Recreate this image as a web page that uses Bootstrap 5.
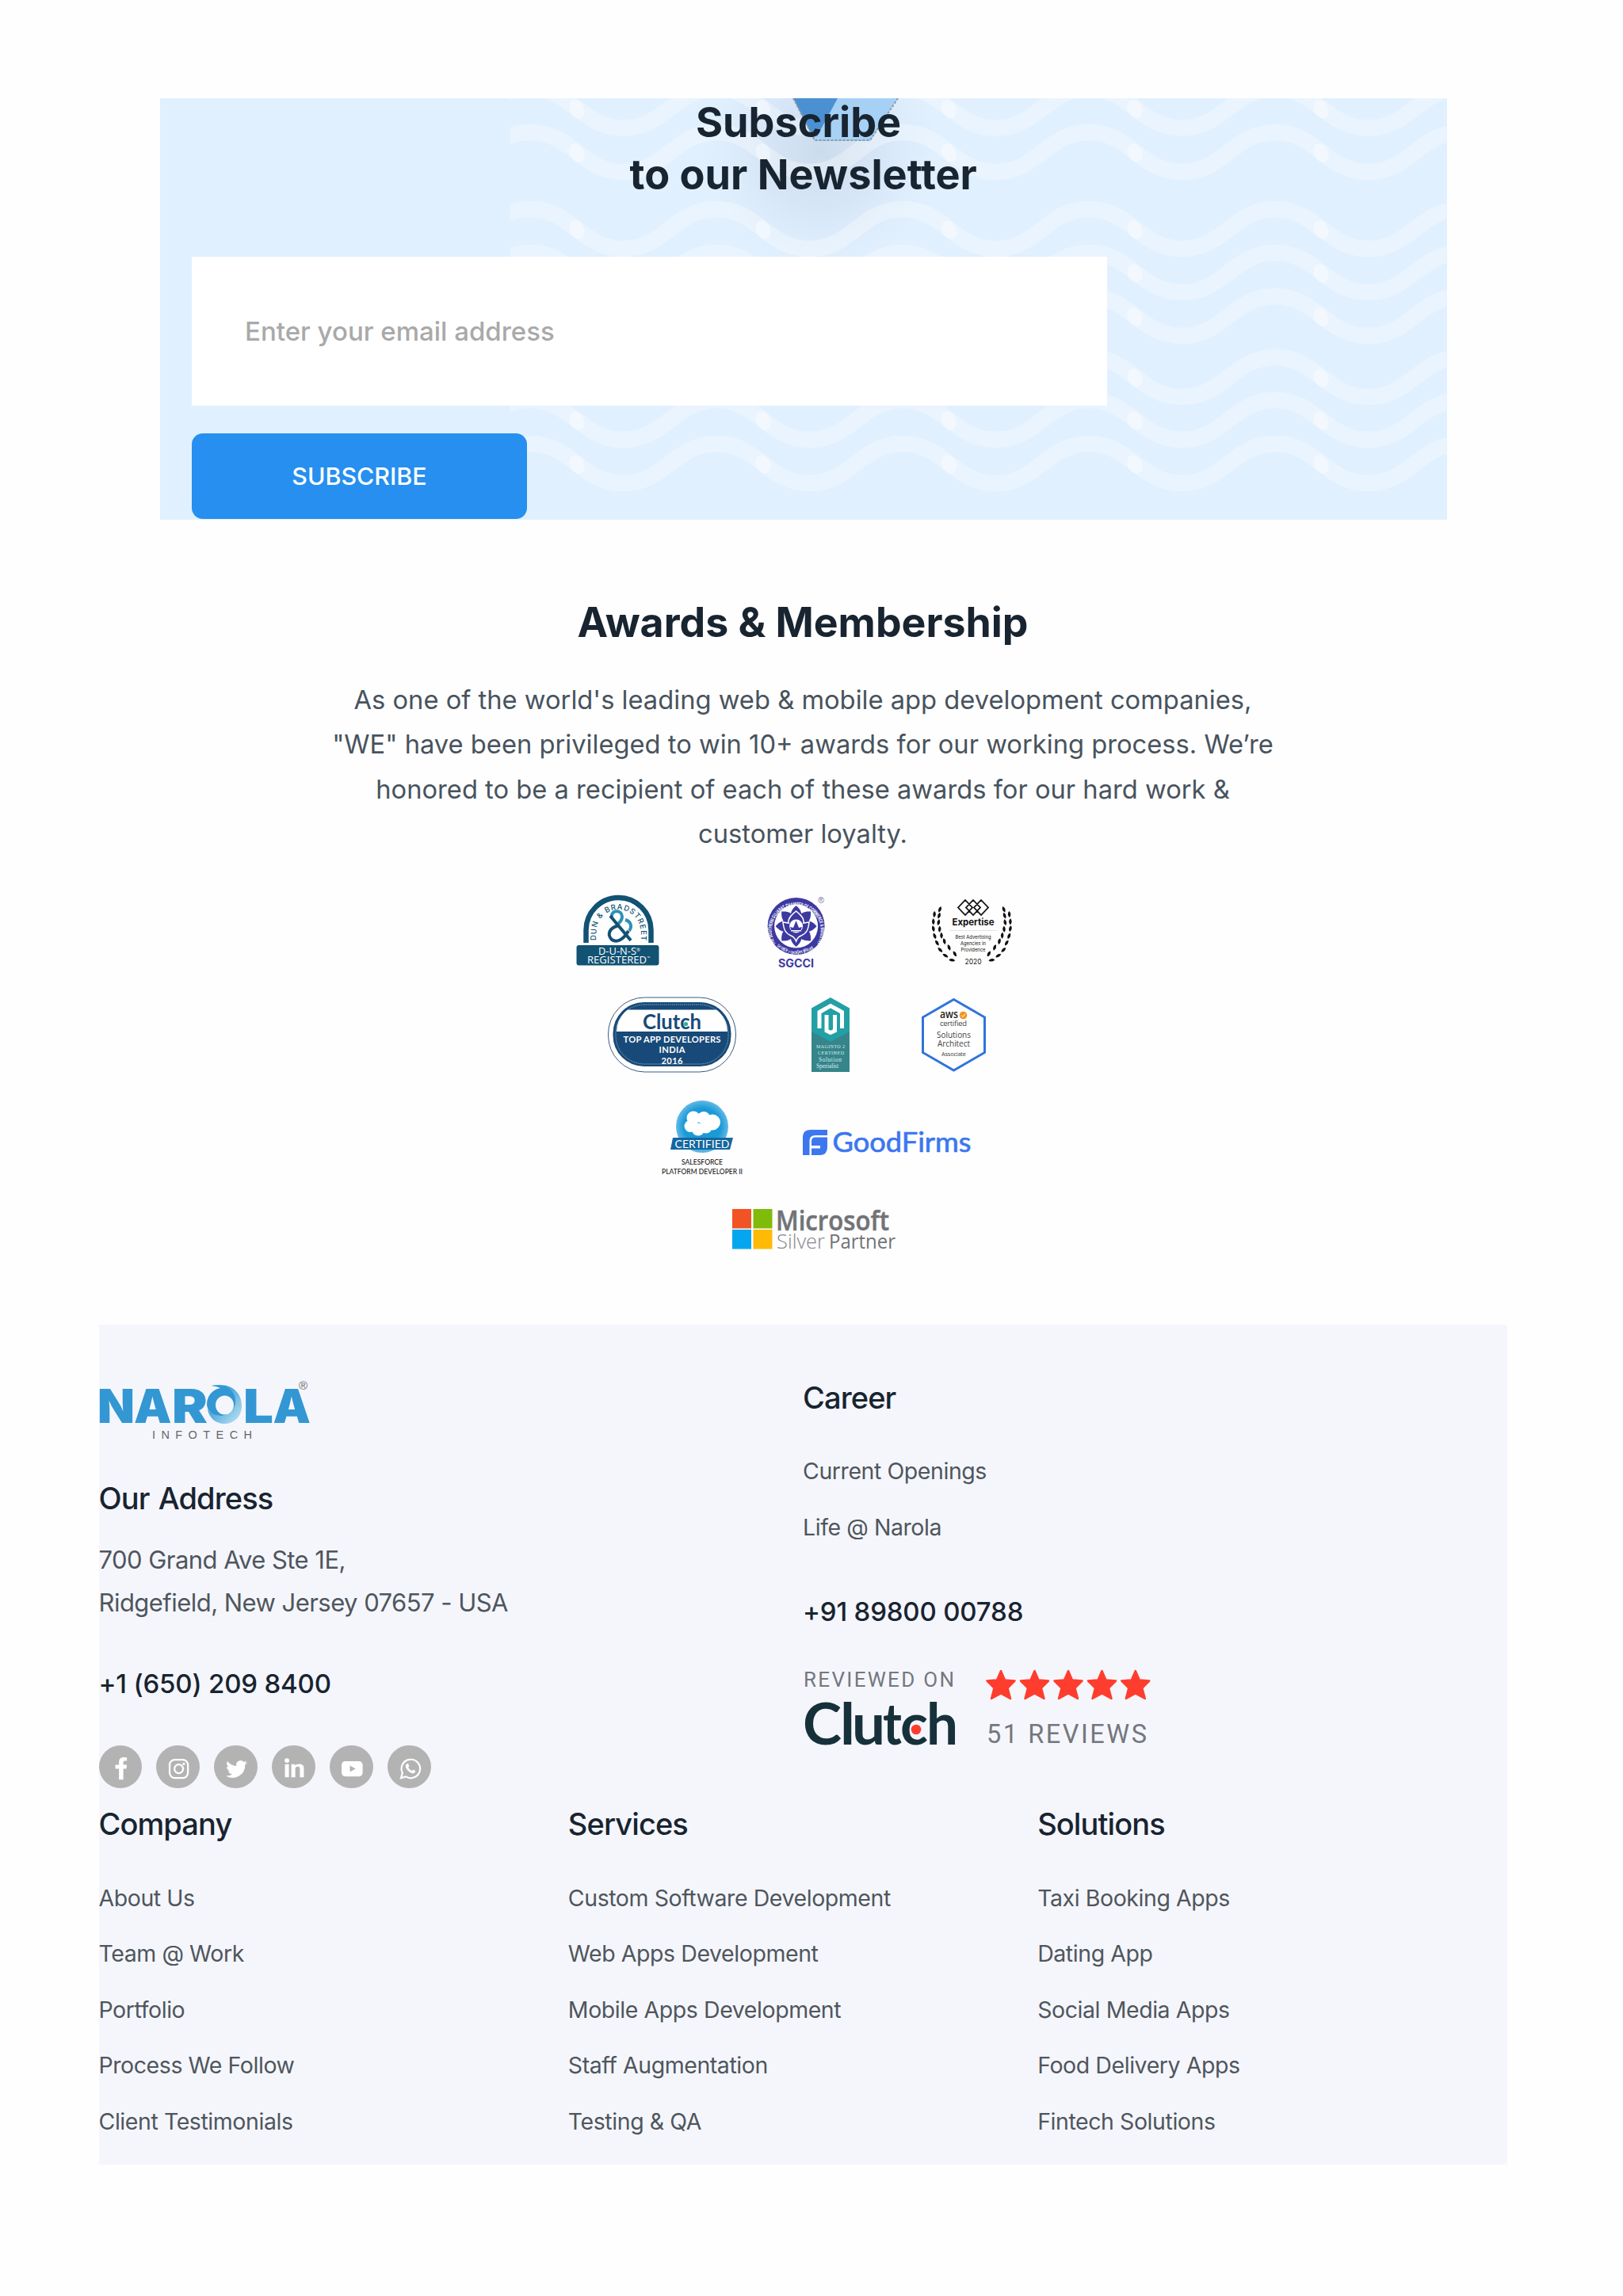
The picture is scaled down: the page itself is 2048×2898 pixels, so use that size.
<!DOCTYPE html>
<html lang="en">
<head>
  <meta charset="UTF-8" />
  <title>Narola Infotech - Newsletter & Awards</title>
  <meta name="viewport" content="width=device-width, initial-scale=1" />
  <link href="https://cdn.jsdelivr.net/npm/bootstrap@5.3.0/dist/css/bootstrap.min.css" rel="stylesheet" />
  <style>
    body {
      background: #fefefe;
      font-family: Inter, "Liberation Sans", sans-serif;
      color: #182430;
    }
    .page {
      width: 1777px;
      margin-left: 124.5px;
      padding-top: 124px;
    }
    svg { display: block; overflow: visible; }

    /* newsletter */
    .newsletter {
      width: 1623.5px;
      height: 531.5px;
      margin-left: 77.5px;
      padding: 0 40px;
      background: #e1f0fe;
    }
    .waves { z-index: 0; }
    .newsletter h2, .newsletter form { z-index: 1; }
    .big-title {
      font-size: 51.8px;
      font-weight: 700;
      line-height: 66px;
      margin: 0;
    }
    .newsletter .big-title { margin: -3px 0 71px; font-size: 52.2px; }
    .email-box {
      width: 1155px;
      height: 188px;
      padding: 0 67px;
      border: 0;
      border-radius: 0;
      background: #fff;
      font-size: 33px;
      font-weight: 500;
    }
    .email-box::placeholder { color: #a9a9a9; }
    .btn-subscribe {
      width: 423px;
      height: 108px;
      margin-top: 35px;
      padding-top: 8px;
      border-radius: 14px;
      background: #268fef;
      color: #fff;
      font-size: 30.4px;
      font-weight: 500;
    }

    /* awards */
    .awards { padding-top: 96.5px; }
    .awards p {
      margin: 36.7px 0 47.3px;
      font-size: 32.7px;
      line-height: 56.5px;
      color: #48535d;
    }
    .award-row-1 { margin-left: 602px; gap: 132px; }
    .award-row-2 { margin: 33px 0 0 641px; gap: 90px; }
    .award-row-3 { margin: 32px 0 0 709px; gap: 72px; }
    .award-row-4 { margin: 38px 0 93px 797px; }

    /* footer */
    .site-footer {
      height: 1060px;
      background: #f5f6fc;
    }
    .site-footer .logo { margin-top: 68px; }
    .foot-title {
      font-size: 38px;
      font-weight: 500;
      line-height: 46px;
      letter-spacing: -.9px;
      word-spacing: 2px;
      margin: 0;
    }
    .logo + .foot-title { margin-top: 50.2px; }
    .address {
      margin: 27.5px 0 55.6px;
      font-size: 31px;
      line-height: 54px;
      letter-spacing: -.54px;
      color: #4f565d;
    }
    .phone {
      font-size: 33px;
      font-weight: 500;
      line-height: 40px;
      letter-spacing: -.18px;
    }
    .social { margin-top: 57.7px; gap: 18.8px; }
    .social a {
      width: 54.2px;
      height: 54.2px;
      background: #b3b3b3;
    }
    .foot-links { margin: 53.6px 0 0; }
    .foot-links li {
      height: 70.5px;
      font-size: 28.5px;
      line-height: 34px;
      letter-spacing: -.43px;
    }
    .foot-links a { color: #4f565d; }
    .career { padding-top: 68.7px; }
    .career .phone { margin-top: 32.4px; }
    .reviews { margin-top: 50px; }
    .foot-menu { margin-top: 22px; }
  </style>
</head>
<body>
<div class="page">

  <section class="newsletter position-relative overflow-hidden">
    <svg class="waves position-absolute top-0 start-0" width="1624" height="532" viewBox="202 124 1624 532">
      <defs>
        <clipPath id="waveClip"><rect x="643.5" y="124" width="1182" height="532" /></clipPath>
        <g id="wave">
          <path d="M434-25C487-25 498 25 551.500 25S616-25 669-25S733 25 786.500 25S851-25 904-25S968 25 1021.500 25S1086-25 1139-25S1203 25 1256.500 25S1321-25 1374-25S1438 25 1491.500 25S1556-25 1609-25S1673 25 1726.500 25S1791-25 1844-25" fill="none" stroke="#fff" stroke-opacity=".31" stroke-width="20.500" />
          <g fill="#fff" fill-opacity=".38">
            <ellipse cx="728" cy="1" rx="9" ry="12" transform="rotate(-25 728 1)" />
            <ellipse cx="963" cy="1" rx="9" ry="12" transform="rotate(-25 963 1)" />
            <ellipse cx="1197.500" cy="1" rx="9" ry="12" transform="rotate(-25 1197.500 1)" />
            <ellipse cx="1432" cy="1" rx="9" ry="12" transform="rotate(-25 1432 1)" />
            <ellipse cx="1667" cy="1" rx="9" ry="12" transform="rotate(-25 1667 1)" />
          </g>
        </g>
        <radialGradient id="shade" cx="1035" cy="190" r="150" gradientUnits="userSpaceOnUse">
          <stop offset="0" stop-color="#b9cbdc" stop-opacity=".55" />
          <stop offset=".5" stop-color="#c4d4ea" stop-opacity=".35" />
          <stop offset="1" stop-color="#d0def2" stop-opacity="0" />
        </radialGradient>
      </defs>
      <rect x="880" y="124" width="310" height="220" fill="url(#shade)" />
      <g clip-path="url(#waveClip)">
        <use href="#wave" y="136.500" />
        <use href="#wave" y="192" />
        <use href="#wave" y="289" />
        <use href="#wave" y="344" />
        <use href="#wave" y="399" />
        <use href="#wave" y="476" />
        <use href="#wave" y="530" />
        <use href="#wave" y="585" />
      </g>
      <!-- tip of the envelope -->
      <path d="M1001 124H1133L1098 178H1028Z" fill="#a6d1f5" />
      <path d="M1001 124H1057L1031 172L1025 172Z" fill="#4a90d3" />
      <path d="M1001 124L1028 177H1098L1133 124" fill="none" stroke="#8f9ba6" stroke-width="2" stroke-dasharray="3 2" />
    </svg>
    <h2 class="big-title text-center position-relative">Subscribe&nbsp;<br />to our Newsletter</h2>
    <form class="position-relative">
      <input type="email" class="form-control email-box shadow-none" placeholder="Enter your email address" />
      <button type="button" class="btn btn-subscribe">SUBSCRIBE</button>
    </form>
  </section>

  <section class="awards">
    <h2 class="big-title text-center">Awards &amp; Membership</h2>
    <p class="text-center">As one of the world's leading web &amp; mobile app development companies,<br />"WE" have been privileged to win 10+ awards for our working process. We’re<br />honored to be a recipient of each of these awards for our hard work &amp;<br />customer loyalty.</p>

    <div class="d-flex award-row-1">
      <!-- D-U-N-S -->
      <svg width="105" height="96" viewBox="726 1128 105 96">
        <defs><path id="dunArc" d="M751.500 1187V1176A28 28 0 0 1 807.500 1176V1190" /></defs>
        <path d="M738.500 1190V1174A41 41 0 0 1 820.500 1174V1190" fill="none" stroke="#125273" stroke-width="6.500" />
        <text font-size="9.500" font-weight="500" fill="#125273"><textPath href="#dunArc" textLength="110">DUN &amp; BRADSTREET</textPath></text>
        <path d="M771 1157C770 1148 784 1148 784 1157C784 1161 782 1163 779 1166M788 1161C795 1163 797 1169 793 1175" fill="none" stroke="#2d92b4" stroke-width="4" />
        <path d="M769 1156L795 1187M780 1168C767 1171 765 1180 771 1186C777 1190 785 1187 792 1175" fill="none" stroke="#125273" stroke-width="4" />
        <rect x="726.500" y="1193" width="104" height="25.500" rx="3" fill="#125273" />
        <g fill="#fff" font-family="Open Sans">
          <text x="754" y="1204.500" font-size="12" textLength="48" lengthAdjust="spacingAndGlyphs">D-U-N-S</text>
          <text x="802" y="1201" font-size="6">®</text>
          <text x="740" y="1216" font-size="12" textLength="75" lengthAdjust="spacingAndGlyphs">REGISTERED</text>
          <text x="815.500" y="1211" font-size="5">™</text>
        </g>
      </svg>
      <!-- SGCCI -->
      <svg width="79" height="96" viewBox="963 1128 79 96">
        <defs>
          <path id="sgTop" d="M978 1191.500A31 31 0 1 1 1029.500 1191.500" />
          <path id="sgLow" d="M979.500 1194.500A34.500 34.500 0 0 0 1028 1194.500" />
          <path id="petal" d="M1003.600 1143C998 1148 996 1152 997 1158H1010.200C1011.200 1152 1009.200 1148 1003.600 1143Z" />
        </defs>
        <circle cx="1003.600" cy="1169" r="36" fill="#3d39a1" />
        <circle cx="1003.600" cy="1169" r="27.500" fill="#fff" />
        <g fill="#3d39a1">
          <use href="#petal" /><use href="#petal" transform="rotate(45 1003.600 1169)" />
          <use href="#petal" transform="rotate(90 1003.600 1169)" /><use href="#petal" transform="rotate(135 1003.600 1169)" />
          <use href="#petal" transform="rotate(180 1003.600 1169)" /><use href="#petal" transform="rotate(225 1003.600 1169)" />
          <use href="#petal" transform="rotate(270 1003.600 1169)" /><use href="#petal" transform="rotate(315 1003.600 1169)" />
        </g>
        <path d="M1003.600 1150C996 1156 993 1160 994 1165L987 1164C988 1173 990 1178 997 1181C1000 1182 1002 1184 1003.600 1188C1005 1184 1007 1182 1010 1181C1017 1178 1019 1173 1020 1164L1013 1165C1014 1160 1011 1156 1003.600 1150Z" fill="#3d39a1" stroke="#fff" stroke-width="1.500" />
        <circle cx="1003.600" cy="1169" r="8.500" fill="#fff" />
        <path d="M996 1170L1000 1171L1003.600 1162L1007 1171L1011 1170L1009.500 1174H997.500Z" fill="#3d39a1" />
        <path d="M997 1175.500H1010" stroke="#9896cf" />
        <text font-size="6.200" font-weight="700" fill="#fff"><textPath href="#sgTop" textLength="133" lengthAdjust="spacingAndGlyphs">THE SOUTHERN GUJARAT CHAMBER OF COMMERCE &amp; INDUSTRY</textPath></text>
        <text font-size="5.500" fill="#fff"><textPath href="#sgLow" textLength="50" lengthAdjust="spacingAndGlyphs">प्रवृत्तिः कार्यसाधिका</textPath></text>
        <text x="1031" y="1140" font-family="Liberation Sans" font-size="11" fill="#77759f">®</text>
        <text x="981" y="1221" font-size="14" font-weight="700" fill="#3d39a1" textLength="45" lengthAdjust="spacingAndGlyphs">SGCCI</text>
      </svg>
      <!-- Expertise -->
      <svg width="108" height="96" viewBox="1172 1128 108 96">
        <defs>
          <path id="leaf" d="M0-12C8-4 6 6-1 12C-8 4-6-5 0-12Z" />
          <g id="laurel">
            <use href="#leaf" transform="translate(655 103)" /><use href="#leaf" transform="translate(651 131) rotate(-5)" />
            <use href="#leaf" transform="translate(651 158) rotate(-15)" /><use href="#leaf" transform="translate(656 186) rotate(-25)" />
            <use href="#leaf" transform="translate(665 212) rotate(-35)" /><use href="#leaf" transform="translate(677 239) rotate(-48)" />
            <use href="#leaf" transform="translate(697 261) rotate(-62)" /><use href="#leaf" transform="translate(722 278) rotate(-85)" />
            <use href="#leaf" transform="translate(676 84) rotate(18)" /><use href="#leaf" transform="translate(673 108) rotate(14)" />
            <use href="#leaf" transform="translate(671 134) rotate(8)" /><use href="#leaf" transform="translate(675 160)" />
            <use href="#leaf" transform="translate(682 184) rotate(-6)" /><use href="#leaf" transform="translate(693 206) rotate(-16)" />
            <use href="#leaf" transform="translate(711 230) rotate(-24)" /><use href="#leaf" transform="translate(733 254) rotate(-32)" />
          </g>
        </defs>
        <g transform="translate(960 1120) scale(.33)" fill="#111">
          <use href="#laurel" />
          <use href="#laurel" transform="translate(1596 0) scale(-1 1)" />
        </g>
        <path d="M1215 1136L1224 1145.500L1215 1155L1206 1145.500ZM1225 1136L1234 1145.500L1225 1155L1216 1145.500ZM1235 1136L1244 1145.500L1235 1155L1226 1145.500Z" fill="none" stroke="#111" stroke-width="1.800" />
        <g fill="#111" text-anchor="middle">
          <text x="1225" y="1167.500" font-size="12" font-weight="700" textLength="53" lengthAdjust="spacingAndGlyphs">Expertise</text>
          <text x="1225" y="1185" font-size="6.500" textLength="45" lengthAdjust="spacingAndGlyphs">Best Advertising</text>
          <text x="1225" y="1193" font-size="6.500" textLength="32" lengthAdjust="spacingAndGlyphs">Agencies in</text>
          <text x="1225" y="1201" font-size="6.500" textLength="31" lengthAdjust="spacingAndGlyphs">Providence</text>
          <text x="1225" y="1217" font-size="9.500" textLength="21" lengthAdjust="spacingAndGlyphs">2020</text>
        </g>
        <path d="M1195 1174.500H1255" stroke="#e3e3e3" />
      </svg>
    </div>

    <div class="d-flex award-row-2">
      <!-- Clutch badge -->
      <svg width="167" height="98" viewBox="765 1257 167 98">
        <defs><clipPath id="pill"><rect x="777" y="1268" width="140" height="75" rx="34" /></clipPath></defs>
        <rect x="766.500" y="1259" width="161" height="94" rx="46" fill="#fff" stroke="#3d5c7c" />
        <rect x="772.500" y="1265" width="149" height="81" rx="39" fill="#174a78" />
        <rect x="776" y="1268" width="142" height="75" rx="36" fill="none" stroke="#a9bfd2" stroke-width=".8" stroke-dasharray="1.500 1" />
        <rect x="776" y="1274.500" width="142" height="27.500" fill="#fff" clip-path="url(#pill)" />
        <text x="810" y="1298.500" font-family="Lato" font-size="27" font-weight="700" fill="#174a78" textLength="74" lengthAdjust="spacingAndGlyphs">Clutch</text>
        <circle cx="864.500" cy="1292.500" r="2.600" fill="#35b08e" />
        <g fill="#fff" font-family="Lato" font-weight="700" font-size="11.200" text-anchor="middle">
          <text x="847" y="1315.500" textLength="123">TOP APP DEVELOPERS</text>
          <text x="847" y="1329" textLength="33">INDIA</text>
          <text x="847" y="1343" textLength="27">2016</text>
        </g>
      </svg>
      <!-- Magento -->
      <svg width="50" height="98" viewBox="1022 1257 50 98">
        <path d="M1023 1272.500L1047 1259L1071 1272.500V1353H1023Z" fill="#22a0a6" />
        <path d="M1023 1302L1047 1315L1071 1302V1353H1023Z" fill="#35858a" />
        <path d="M1033 1298V1277.500L1047 1269.500L1061.500 1277.500V1298M1042 1281V1301L1047 1303.500L1052.500 1301V1281" fill="none" stroke="#fff" stroke-width="5" />
        <g fill="#d8ecec" font-family="Liberation Serif">
          <text x="1029" y="1323" font-size="6" textLength="36">MAGINTO 2</text>
          <text x="1031" y="1331" font-size="6" textLength="33">CERTIHED</text>
          <text x="1032" y="1340" font-size="7.500" textLength="29">Solution</text>
          <text x="1029" y="1347.500" font-size="7.500" textLength="28">Spezialist</text>
        </g>
      </svg>
      <!-- AWS -->
      <svg width="81" height="98" viewBox="1162 1257 81 98">
        <path d="M1202.500 1261.500L1241.500 1284V1328.500L1202.500 1351L1163.500 1328.500V1284Z" fill="#fff" stroke="#2f74dc" stroke-width="3" />
        <text x="1185" y="1285" font-family="Open Sans" font-size="13.500" font-weight="600" fill="#222" textLength="23" lengthAdjust="spacingAndGlyphs">aws</text>
        <circle cx="1214.500" cy="1281.500" r="4.800" fill="#f29325" />
        <path d="M1212 1281.500L1214 1283.500L1217 1279.500" fill="none" stroke="#fff" />
        <g font-family="Open Sans" fill="#444" text-anchor="middle">
          <text x="1202" y="1294.500" font-size="9.500" textLength="34">certified</text>
          <text x="1202.500" y="1309.500" font-size="10" font-weight="500" textLength="43">Solutions</text>
          <text x="1202.500" y="1320.500" font-size="10" font-weight="500" textLength="41">Architect</text>
          <text x="1202.500" y="1332.500" font-size="7.500" textLength="31">Associate</text>
        </g>
      </svg>
    </div>

    <div class="d-flex award-row-3">
      <!-- Salesforce -->
      <svg width="106" height="100" viewBox="833 1387 106 100">
        <defs>
          <radialGradient id="sfGrad"><stop offset=".7" stop-color="#1a9ad6" /><stop offset="1" stop-color="#62b9e8" /></radialGradient>
        </defs>
        <circle cx="885" cy="1422" r="33" fill="url(#sfGrad)" />
        <g fill="#fff">
          <circle cx="874" cy="1411" r="8.500" /><circle cx="887" cy="1411" r="8" /><circle cx="898" cy="1416.500" r="10" />
          <circle cx="870" cy="1421.500" r="7.500" /><circle cx="880" cy="1425.500" r="8" /><circle cx="890" cy="1423" r="7.500" />
        </g>
        <path d="M848 1436H924L920 1451H845Z" fill="#15679f" />
        <g font-family="Lato" text-anchor="middle">
          <text x="885" y="1448.500" font-size="14" fill="#fff" textLength="69">CERTIFIED</text>
          <g font-size="9.800" font-weight="500" fill="#222">
            <text x="885" y="1470" textLength="52" lengthAdjust="spacingAndGlyphs">SALESFORCE</text>
            <text x="885" y="1481.500" textLength="102" lengthAdjust="spacingAndGlyphs">PLATFORM DEVELOPER II</text>
          </g>
        </g>
      </svg>
      <!-- GoodFirms -->
      <svg width="216" height="100" viewBox="1011 1387 216 100">
        <path d="M1022 1426H1043V1433H1028Q1020.500 1433 1020.500 1440V1458H1012V1436Q1012 1426 1022 1426Z" fill="#3c77f0" />
        <path d="M1028 1435.500H1043V1448Q1043 1458 1033 1458H1023V1449.500H1034V1446H1023V1440.500Q1023 1435.500 1028 1435.500Z" fill="#3c77f0" />
        <text x="1049.500" y="1453.500" font-family="Lato" font-size="34" fill="#3c77f0" stroke="#3c77f0" stroke-width=".7" textLength="175" lengthAdjust="spacingAndGlyphs">GoodFirms</text>
      </svg>
    </div>

    <div class="d-flex award-row-4">
      <!-- Microsoft -->
      <svg width="212" height="54" viewBox="921 1525 212 54">
        <rect x="923" y="1526" width="24" height="24.500" fill="#f15325" />
        <rect x="949.500" y="1526" width="24" height="24.500" fill="#80bb09" />
        <rect x="923" y="1552" width="24" height="24.500" fill="#05a6f0" />
        <rect x="949.500" y="1552" width="24" height="24.500" fill="#ffba08" />
        <g font-family="Open Sans">
          <text x="978" y="1553" font-size="33.500" font-weight="600" fill="#717377" stroke="#717377" stroke-width=".5" textLength="143" lengthAdjust="spacingAndGlyphs">Microsoft</text>
          <text x="979" y="1575.500" font-size="25" font-weight="300" fill="#85878a" textLength="61" lengthAdjust="spacingAndGlyphs">Silver</text>
          <text x="1045" y="1575.500" font-size="25" fill="#717377" textLength="84" lengthAdjust="spacingAndGlyphs">Partner</text>
        </g>
      </svg>
    </div>
  </section>

  <footer class="site-footer">
    <div class="row g-0">
      <div class="col-6">
        <svg class="logo" width="270" height="78" viewBox="124 1740 270 78">
          <defs>
            <linearGradient id="oGrad" x1="0" y1="0" x2="1" y2="1"><stop offset=".3" stop-color="#3a9ed6" /><stop offset="1" stop-color="#c6e6f5" /></linearGradient>
          </defs>
          <g fill="#3397d3" font-weight="900" font-size="58.500">
            <text x="122" y="1795.700" textLength="47" lengthAdjust="spacingAndGlyphs">N</text>
            <text x="168" y="1795.700" textLength="47.500" lengthAdjust="spacingAndGlyphs">A</text>
            <text x="216" y="1795.700" textLength="45" lengthAdjust="spacingAndGlyphs">R</text>
            <text x="306" y="1795.700" textLength="38" lengthAdjust="spacingAndGlyphs">L</text>
            <text x="343.500" y="1795.700" textLength="47.500" lengthAdjust="spacingAndGlyphs">A</text>
          </g>
          <path d="M266 1749C290 1744 305 1757 304 1776C303 1789 294 1797 282 1797C271 1797 262 1789 261 1778C264 1784 271 1787 279 1787C289 1787 294 1780 294 1770C294 1761 288 1752 266 1749Z" fill="url(#oGrad)" />
          <path d="M266 1749C288 1747 297 1758 296 1770C295 1781 287 1787 278 1787C268 1787 261 1782 260 1773C260 1763 266 1754 277 1752C273 1750 270 1749 266 1749Z" fill="#3397d3" />
          <ellipse cx="282.500" cy="1773.500" rx="11.500" ry="12" fill="#f5f6fc" />
          <text x="376" y="1753.500" font-family="Liberation Sans" font-size="15" fill="#666">®</text>
          <text x="191" y="1816" font-family="Liberation Sans" font-size="14.500" fill="#666" textLength="126">INFOTECH</text>
        </svg>
        <h3 class="foot-title">Our Address</h3>
        <div class="address">700 Grand Ave Ste 1E,<br />Ridgefield, New Jersey 07657 - USA</div>
        <div class="phone">+1 (650) 209 8400</div>
        <div class="d-flex social">
          <a href="#" class="rounded-circle" aria-label="Facebook"><svg viewBox="0 0 54 54"><path d="M25 43V29.500H20.500V24.500H25V21C25 17 27.500 15 31 15L35 15.200V19.500H32.500C30.500 19.500 30.500 20.500 30.500 22V24.500H35L34.300 29.500H30.500V43Z" fill="#fff" /></svg></a>
          <a href="#" class="rounded-circle" aria-label="Instagram"><svg viewBox="0 0 54 54"><g fill="none" stroke="#fff" stroke-width="2.300"><rect x="17" y="18" width="23" height="23" rx="6.500" /><circle cx="28.500" cy="29.500" r="5.500" /></g><circle cx="34.800" cy="23.200" r="1.600" fill="#fff" /></svg></a>
          <a href="#" class="rounded-circle" aria-label="Twitter"><svg viewBox="0 0 54 54"><path transform="translate(15 16.500) scale(1.120)" d="M24 4.600a10 10 0 0 1-2.800.8 5 5 0 0 0 2.100-2.700 10 10 0 0 1-3.100 1.200 4.900 4.900 0 0 0-8.400 4.500A14 14 0 0 1 1.700 3.100a4.900 4.900 0 0 0 1.500 6.600 5 5 0 0 1-2.200-.6v.1a4.900 4.900 0 0 0 3.900 4.800 5 5 0 0 1-2.200.1 4.900 4.900 0 0 0 4.600 3.400A10 10 0 0 1 0 19.500a14 14 0 0 0 21.500-12.400A10 10 0 0 0 24 4.600z" fill="#fff" /></svg></a>
          <a href="#" class="rounded-circle" aria-label="LinkedIn"><svg viewBox="0 0 54 54"><path d="M16.500 24H21.500V45.500H16.500ZM24.500 24H29.200V26.300C30.200 24.600 32 23.600 34.200 23.600C39 23.600 40.300 26.500 40.300 31V45.500H35.300V32C35.300 29.800 35 28 32.700 28C30.200 28 29.500 29.800 29.500 32V45.500H24.500Z" transform="translate(0 5.500) scale(1 .76)" fill="#fff" /><circle cx="19" cy="19" r="2.900" fill="#fff" /></svg></a>
          <a href="#" class="rounded-circle" aria-label="YouTube"><svg viewBox="0 0 54 54"><rect x="15" y="20" width="26.500" height="19" rx="4.500" fill="#fff" /><path d="M25.500 25.500V33.500L32.500 29.500Z" fill="#b3b3b3" /></svg></a>
          <a href="#" class="rounded-circle" aria-label="WhatsApp"><svg viewBox="0 0 54 54"><path d="M17 41L18.800 34.700A11.700 11.700 0 1 1 23 39.300Z" fill="none" stroke="#fff" stroke-width="2.200" /><path d="M24 23.500C25 22.700 26 22.800 26.300 23.700L27.200 26C27.400 26.800 26 27.500 26.200 28C27.300 30 28.600 31.200 30.500 32C31.200 32.200 31.800 30.500 32.500 30.700L35 32C35.500 32.500 34.500 34.800 32.800 35.200C29.500 36 22.600 30.500 22.700 26C22.700 25 23.300 24 24 23.500Z" fill="#fff" /></svg></a>
        </div>
      </div>
      <div class="col-6 career">
        <h3 class="foot-title">Career</h3>
        <ul class="list-unstyled foot-links">
          <li><a href="#" class="text-decoration-none">Current Openings</a></li>
          <li><a href="#" class="text-decoration-none">Life @ Narola</a></li>
        </ul>
        <div class="phone">+91 89800 00788</div>
        <svg class="reviews" width="450" height="102" viewBox="1013 2104 450 102">
          <defs><path id="star" d="M0-18L5-6.500L17.500-5.500L8.500 3.500L12 17L0 10.500L-12 17L-8.500 3.500L-17.500-5.500L-5-6.500Z" stroke-width="2.500" stroke-linejoin="round" /></defs>
          <text x="1014" y="2129" font-family="Roboto" font-size="26" fill="#74777e" textLength="190">REVIEWED ON</text>
          <g font-family="Lato" font-size="72" font-weight="700" fill="#17313b">
            <text x="1013" y="2201.500" textLength="49" lengthAdjust="spacingAndGlyphs">C</text>
            <text x="1060" y="2201.500" textLength="19" lengthAdjust="spacingAndGlyphs">l</text>
            <text x="1075" y="2201.500" textLength="42" lengthAdjust="spacingAndGlyphs">u</text>
            <text x="1114" y="2201.500" textLength="24" lengthAdjust="spacingAndGlyphs">t</text>
            <text x="1136" y="2201.500" textLength="35" lengthAdjust="spacingAndGlyphs">c</text>
            <text x="1169" y="2201.500" textLength="40" lengthAdjust="spacingAndGlyphs">h</text>
          </g>
          <circle cx="1156" cy="2183" r="6.300" fill="#ff3d2e" />
          <g fill="#ff3d2e" stroke="#ff3d2e">
            <use href="#star" x="1263" y="2127" /><use href="#star" x="1305.500" y="2127" /><use href="#star" x="1348" y="2127" />
            <use href="#star" x="1390.500" y="2127" /><use href="#star" x="1432.800" y="2127" />
          </g>
          <text x="1245" y="2199.500" font-family="Roboto" font-size="32.500" fill="#74777e" textLength="202">51 REVIEWS</text>
        </svg>
      </div>
    </div>
    <div class="row g-0 foot-menu">
      <div class="col-4">
        <h3 class="foot-title">Company</h3>
        <ul class="list-unstyled foot-links">
          <li><a href="#" class="text-decoration-none">About Us</a></li>
          <li><a href="#" class="text-decoration-none">Team @ Work</a></li>
          <li><a href="#" class="text-decoration-none">Portfolio</a></li>
          <li><a href="#" class="text-decoration-none">Process We Follow</a></li>
          <li><a href="#" class="text-decoration-none">Client Testimonials</a></li>
        </ul>
      </div>
      <div class="col-4">
        <h3 class="foot-title">Services</h3>
        <ul class="list-unstyled foot-links">
          <li><a href="#" class="text-decoration-none">Custom Software Development</a></li>
          <li><a href="#" class="text-decoration-none">Web Apps Development</a></li>
          <li><a href="#" class="text-decoration-none">Mobile Apps Development</a></li>
          <li><a href="#" class="text-decoration-none">Staff Augmentation</a></li>
          <li><a href="#" class="text-decoration-none">Testing &amp; QA</a></li>
        </ul>
      </div>
      <div class="col-4">
        <h3 class="foot-title">Solutions</h3>
        <ul class="list-unstyled foot-links">
          <li><a href="#" class="text-decoration-none">Taxi Booking Apps</a></li>
          <li><a href="#" class="text-decoration-none">Dating App</a></li>
          <li><a href="#" class="text-decoration-none">Social Media Apps</a></li>
          <li><a href="#" class="text-decoration-none">Food Delivery Apps</a></li>
          <li><a href="#" class="text-decoration-none">Fintech Solutions</a></li>
        </ul>
      </div>
    </div>
  </footer>
</div>
<script src="https://cdn.jsdelivr.net/npm/bootstrap@5.3.0/dist/js/bootstrap.bundle.min.js"></script>
</body>
</html>
